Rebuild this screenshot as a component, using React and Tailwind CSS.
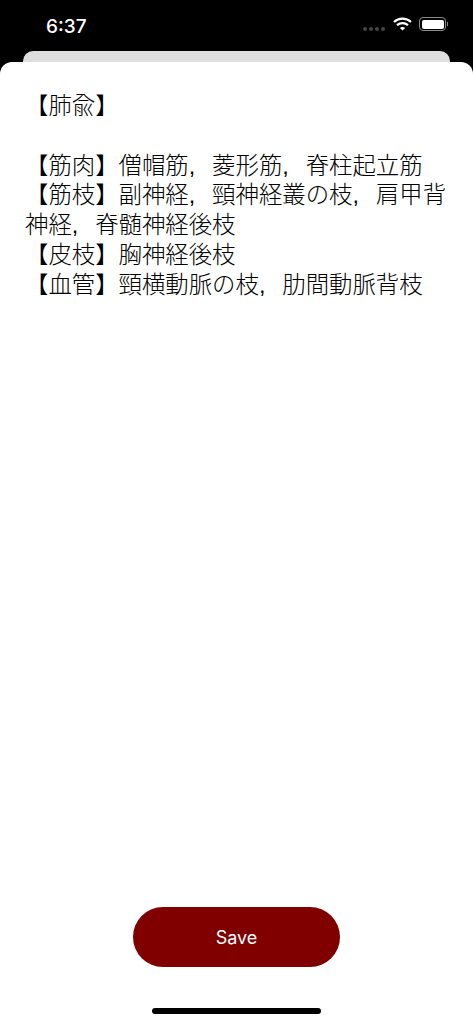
import React from "react";

export default function App() {
  return (
    <div className="relative flex h-[1024px] w-[473px] flex-col overflow-hidden bg-black font-['Inter','Noto_Sans_CJK_JP',sans-serif]">
      <div className="flex h-[51px] shrink-0 items-start justify-between pl-[46px] pr-[25px] pt-[15px] text-white">
        <span className="text-[19px] font-medium leading-[23px]">6:37</span>
        <div className="flex items-center pt-[2px]">
          <div className="mr-[8px] mt-[9px] flex gap-[2px]">
            <span className="h-[4px] w-[4px] rounded-full bg-[#444]" />
            <span className="h-[4px] w-[4px] rounded-full bg-[#444]" />
            <span className="h-[4px] w-[4px] rounded-full bg-[#444]" />
            <span className="h-[4px] w-[4px] rounded-full bg-[#444]" />
          </div>
          <svg width="19" height="14" viewBox="0 0 19 14" className="mr-[7px]" fill="none" stroke="white" strokeWidth="2.2">
            <path d="M1 5 C5.8 0.6 13.2 0.6 18 5" />
            <path d="M4 8.2 C7.2 5.4 11.8 5.4 15 8.2" />
            <path d="M9.5 13.5 L6.9 10.9 C8.4 9.8 10.6 9.8 12.1 10.9 Z" fill="white" stroke="none" />
          </svg>
          <div className="flex items-center">
            <div className="h-[14px] w-[27px] rounded-[4px] border border-[#8a8a8a] p-[1.5px]">
              <div className="h-full w-full rounded-[2px] bg-white" />
            </div>
            <div className="ml-[1px] h-[4px] w-[1px] bg-[#8a8a8a]" />
          </div>
        </div>
      </div>

      <div className="mx-[23px] h-[11px] shrink-0 rounded-t-[10px] bg-[#dedede]" />

      <main className="flex min-h-0 flex-1 flex-col items-center rounded-t-[12px] bg-white">
        <div className="w-full flex-1 pl-[25px] pr-[24px] pt-[30px] font-['Liberation_Sans','Noto_Sans_CJK_JP',sans-serif] text-[23.4px] font-light leading-[29.8px] text-black [word-spacing:0.444em]">
          <p>【肺兪】</p>
          <p>{"\u00a0"}</p>
          <p>【筋肉】僧帽筋, 菱形筋, 脊柱起立筋</p>
          <p>【筋枝】副神経, 頸神経叢の枝, 肩甲背神経, 脊髄神経後枝</p>
          <p>【皮枝】胸神経後枝</p>
          <p>【血管】頸横動脈の枝, 肋間動脈背枝</p>
        </div>
        <button className="mb-[41px] h-[60px] w-[207px] rounded-full bg-[#800000] text-[18px] font-normal text-white">
          Save
        </button>
        <div className="mb-[10px] h-[6px] w-[169px] rounded-full bg-black" />
      </main>
    </div>
  );
}
